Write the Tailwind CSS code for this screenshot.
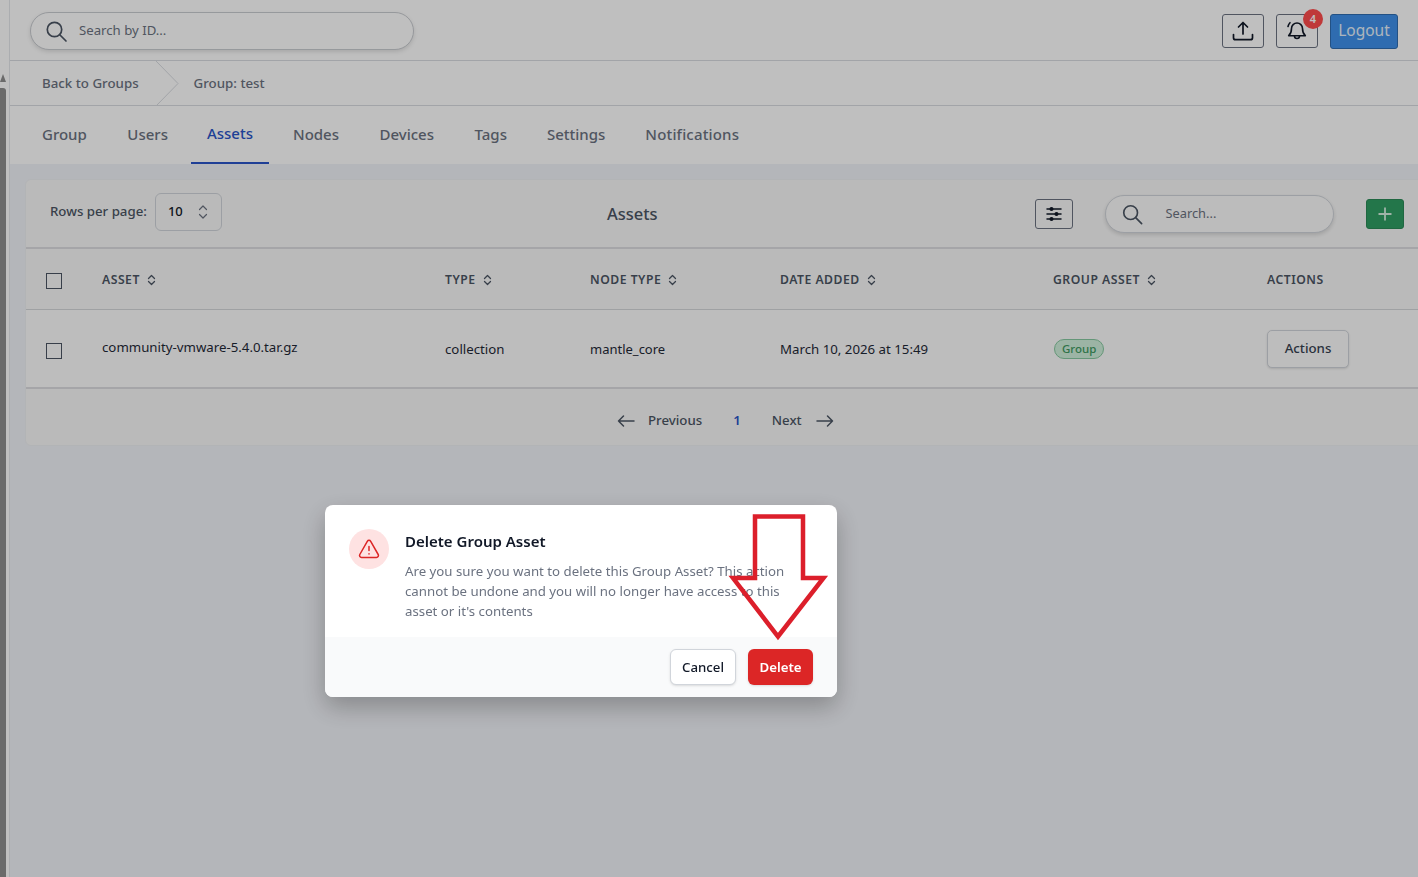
<!DOCTYPE html>
<html lang="en">
<head>
  <meta charset="UTF-8" />
  <meta name="viewport" content="width=device-width, initial-scale=1.0" />
  <title>Group Assets</title>
  <script src="https://cdn.jsdelivr.net/npm/@tailwindcss/browser@4"></script>
</head>
<body class="h-[877px] overflow-hidden bg-white font-['Noto_Sans',sans-serif] text-[#111827]">
  <!-- Page behind the dialog -->
  <div class="ml-[9px] flex h-[877px] w-[1409px] flex-col overflow-hidden border-l border-[#e5e7eb] bg-[#f1f3f8]">
    <!-- Top bar -->
    <header class="flex h-[61px] shrink-0 items-center border-b border-[#d8dbe0] bg-white pl-[20px] pr-[20px] pt-[2px]">
      <div class="flex h-[38px] w-[384px] items-center rounded-full border border-[#c9ccd1] bg-white pl-[13px] shadow-[0_2px_4px_rgba(0,0,0,0.12)]">
        <svg class="h-[24px] w-[24px] text-[#4b5563]" viewBox="0 0 24 24" fill="none" stroke="currentColor" stroke-width="1.7" stroke-linecap="round"><circle cx="10.5" cy="10.5" r="7.2"/><path d="M16 16l6 6"/></svg>
        <span class="ml-[11px] text-[13.2px] text-[#6b7280]">Search by ID...</span>
      </div>
      <div class="ml-auto flex items-center">
        <button class="flex h-[34px] w-[42px] items-center justify-center rounded-[3px] border border-[#6b7280] bg-white">
          <svg class="h-[24px] w-[24px] text-[#111827]" viewBox="0 0 24 24" fill="none" stroke="currentColor" stroke-width="1.7" stroke-linecap="round" stroke-linejoin="round"><path d="M12 15V3.5M7.5 8L12 3.5 16.5 8"/><path d="M2.5 15.5v3.2a2 2 0 002 2h15a2 2 0 002-2v-3.2"/></svg>
        </button>
        <button class="relative ml-[12px] flex h-[34px] w-[42px] items-center justify-center rounded-[3px] border border-[#6b7280] bg-white">
          <svg class="h-[24px] w-[24px] text-[#111827]" viewBox="0 0 24 24" fill="none" stroke="currentColor" stroke-width="1.6" stroke-linecap="round" stroke-linejoin="round"><path d="M6.5 9.5a5.5 5.5 0 0111 0c0 4 1.2 5.8 2.8 7.2H3.7C5.3 15.300 6.500 13.500 6.500 9.500z"/><path d="M9.500 17a2.500 2.500 0 005 0"/><path d="M3 7.500c.3-1.500 1-2.800 2-3.800"/></svg>
          <span class="absolute right-[-6px] top-[-6px] flex h-[20px] w-[20px] items-center justify-center rounded-full bg-[#ff4c4c] text-[11px] font-semibold text-white">4</span>
        </button>
        <button class="ml-[12px] h-[35px] w-[68px] rounded-[3px] border border-[#2f6db0] bg-[#3f91eb] text-[15.5px] text-[#e8f1fb]">Logout</button>
      </div>
    </header>

    <!-- Breadcrumb -->
    <nav class="flex h-[45px] shrink-0 items-center border-b border-[#d8dbe0] bg-white pl-[32px] pt-[1px] text-[13.3px] font-medium text-[#6b7280]">
      <span>Back to Groups</span>
      <svg class="ml-[16px] h-[45px] w-[24px] text-[#d8dbe0]" viewBox="0 0 24 45" fill="none" stroke="currentColor"><path d="M1 0l22 22.500L1 45"/></svg>
      <span class="ml-[15px]">Group: test</span>
    </nav>

    <!-- Tabs -->
    <div class="flex h-[58px] shrink-0 items-stretch gap-2 bg-white pl-[16px] text-[15px] font-medium text-[#6b7280]">
      <a class="flex items-center pl-4 pr-[16.500px] pb-[2px]">Group</a>
      <a class="flex items-center pl-4 pr-[15.500px] pb-[2px]">Users</a>
      <a class="flex items-center border-b-2 border-[#2a55c8] pl-[15.500px] pr-4 pb-[2px] text-[#2a55c8]">Assets</a>
      <a class="flex items-center pl-4 pr-[16.500px] pb-[2px]">Nodes</a>
      <a class="flex items-center pl-4 pr-[16.500px] pb-[2px]">Devices</a>
      <a class="flex items-center px-4 pb-[2px]">Tags</a>
      <a class="flex items-center px-4 pb-[2px]">Settings</a>
      <a class="flex items-center pl-[16px] pb-[2px] tracking-[0.17px]">Notifications</a>
    </div>

    <!-- Assets panel -->
    <section class="ml-[15px] mt-[15px] w-[1420px] shrink-0 rounded-[6px] border border-[#eef0f3] bg-[#f9f9f9]">
      <div class="flex h-[69px] items-center border-b-2 border-[#dcdde0] pl-[24px] pt-[1px]">
        <span class="mb-[4px] text-[13.25px] font-medium text-[#4b5563]">Rows per page:</span>
        <div class="mb-[4px] ml-[8px] flex h-[38px] w-[67px] items-center rounded-[6px] border border-[#d1d5db] bg-[#f9f9f9] pl-[12px]">
          <span class="text-[13px] font-medium text-[#111827]">10</span>
          <svg class="ml-[14px] h-[18px] w-[12px] text-[#6b7280]" viewBox="0 0 12 18" fill="none" stroke="currentColor" stroke-width="1.200" stroke-linecap="round" stroke-linejoin="round"><path d="M2.500 6.500L6 3l3.500 3.500M2.500 11.500L6 15l3.500-3.500"/></svg>
        </div>
        <h2 class="ml-[385px] text-[16.5px] font-medium text-[#4b5563]">Assets</h2>
        <button class="ml-[377px] flex h-[30px] w-[38px] items-center justify-center rounded-[3px] border border-[#6b7280]">
          <svg class="h-[18px] w-[18px] text-[#111827]" viewBox="0 0 18 18" fill="none" stroke="currentColor" stroke-width="1.500" stroke-linecap="round"><path d="M2 4h14M2 9h14M2 14h14"/><circle cx="6.500" cy="4" r="1.300" fill="currentColor"/><circle cx="11.500" cy="9" r="1.300" fill="currentColor"/><circle cx="6.500" cy="14" r="1.300" fill="currentColor"/></svg>
        </button>
        <div class="ml-[32px] flex h-[38px] w-[229px] items-center rounded-full border border-[#d1d5db] bg-[#fbfbfb] pl-[15px] shadow-[0_2px_4px_rgba(0,0,0,0.14)]">
          <svg class="h-[22px] w-[22px] text-[#4b5563]" viewBox="0 0 24 24" fill="none" stroke="currentColor" stroke-width="1.800" stroke-linecap="round"><circle cx="10.500" cy="10.500" r="7.500"/><path d="M16 16l6.500 6.500"/></svg>
          <span class="ml-[23px] text-[12.8px] text-[#6b7280]">Search...</span>
        </div>
        <button class="ml-[32px] flex h-[30px] w-[38px] items-center justify-center rounded-[3px] border border-[#2b8a57] bg-[#2f9e63]">
          <svg class="h-[16px] w-[16px] text-[#d6efe0]" viewBox="0 0 16 16" fill="none" stroke="currentColor" stroke-width="1.800"><path d="M8 1.500v13M1.500 8h13"/></svg>
        </button>
      </div>

      <!-- Table head -->
      <div class="grid h-[61px] grid-cols-[76px_343px_145px_190px_273px_214px_1fr] items-center border-b border-[#d5d7da] pt-[2px] text-[12.2px] font-semibold tracking-[0.5px] text-[#4b5563]">
        <span class="ml-[20px] mt-[2px] h-[16px] w-[16px] border border-[#4b5563] bg-[#fafafa]"></span>
        <span class="flex items-center">ASSET<svg class="ml-[7px] h-[12px] w-[9px]" viewBox="0 0 9 12" fill="none" stroke="currentColor" stroke-width="1.300" stroke-linecap="round" stroke-linejoin="round"><path d="M1.500 4.500L4.500 1.500l3 3M1.500 7.500l3 3 3-3"/></svg></span>
        <span class="flex items-center">TYPE<svg class="ml-[7px] h-[12px] w-[9px]" viewBox="0 0 9 12" fill="none" stroke="currentColor" stroke-width="1.300" stroke-linecap="round" stroke-linejoin="round"><path d="M1.500 4.500L4.500 1.500l3 3M1.500 7.500l3 3 3-3"/></svg></span>
        <span class="flex items-center">NODE TYPE<svg class="ml-[7px] h-[12px] w-[9px]" viewBox="0 0 9 12" fill="none" stroke="currentColor" stroke-width="1.300" stroke-linecap="round" stroke-linejoin="round"><path d="M1.500 4.500L4.500 1.500l3 3M1.500 7.500l3 3 3-3"/></svg></span>
        <span class="flex items-center">DATE ADDED<svg class="ml-[7px] h-[12px] w-[9px]" viewBox="0 0 9 12" fill="none" stroke="currentColor" stroke-width="1.300" stroke-linecap="round" stroke-linejoin="round"><path d="M1.500 4.500L4.500 1.500l3 3M1.500 7.500l3 3 3-3"/></svg></span>
        <span class="flex items-center">GROUP ASSET<svg class="ml-[7px] h-[12px] w-[9px]" viewBox="0 0 9 12" fill="none" stroke="currentColor" stroke-width="1.300" stroke-linecap="round" stroke-linejoin="round"><path d="M1.500 4.500L4.500 1.500l3 3M1.500 7.500l3 3 3-3"/></svg></span>
        <span>ACTIONS</span>
      </div>

      <!-- Table row -->
      <div class="grid h-[79px] grid-cols-[76px_343px_145px_190px_273px_214px_1fr] items-center border-b-2 border-[#dcdde0] bg-[#fdfdfd] pt-[2px] text-[13.25px] text-[#1f2937]">
        <span class="ml-[20px] mt-[2px] h-[16px] w-[16px] border border-[#4b5563] bg-[#fdfdfd]"></span>
        <span class="mb-[4px]">community-vmware-5.4.0.tar.gz</span>
        <span>collection</span>
        <span class="text-[13px]">mantle_core</span>
        <span>March 10, 2026 at 15:49</span>
        <span class="-mt-[2px]"><span class="ml-[1px] inline-block h-[20px] rounded-full border border-[#86c9a0] bg-[#d1f0dc] px-[7px] text-[11.500px] font-medium leading-[18px] text-[#3f9a62]">Group</span></span>
        <span class="-mt-[2px]"><button class="h-[38px] w-[82px] rounded-[5px] border border-[#d1d5db] bg-[#fdfdfd] text-[13.25px] font-medium text-[#374151] shadow-sm">Actions</button></span>
      </div>

      <!-- Pagination -->
      <div class="flex h-[56px] items-center pl-[591px] pt-[7px] text-[13.25px] font-medium text-[#4b5563]">
        <svg class="h-[14px] w-[18px]" viewBox="0 0 18 14" fill="none" stroke="currentColor" stroke-width="1.500" stroke-linecap="round" stroke-linejoin="round"><path d="M17 7H1.500M6.500 2l-5 5 5 5"/></svg>
        <span class="ml-[13px]">Previous</span>
        <span class="ml-[31px] font-semibold text-[#2a55c8]">1</span>
        <span class="ml-[31px]">Next</span>
        <svg class="ml-[14px] h-[14px] w-[18px]" viewBox="0 0 18 14" fill="none" stroke="currentColor" stroke-width="1.500" stroke-linecap="round" stroke-linejoin="round"><path d="M1 7h15.500M11.500 2l5 5-5 5"/></svg>
      </div>
    </section>
  </div>

  <!-- Backdrop -->
  <div class="fixed inset-0 bg-black/25"></div>

  <!-- Scrollbar sits on top of the backdrop -->
  <div class="fixed left-0 top-[74px] h-[8px] w-[6px] bg-[#6a6a6a] [clip-path:polygon(50%_0,100%_100%,0_100%)]"></div>
  <div class="fixed bottom-0 left-0 top-[88px] w-[6px] rounded-tr-[3px] bg-[#6a6a6a]"></div>

  <!-- Delete dialog -->
  <div class="fixed left-[325px] top-[505px] w-[512px] overflow-hidden rounded-[8px] bg-white shadow-[0_10px_25px_rgba(0,0,0,0.25)]">
    <div class="flex h-[132px] pl-[24px] pt-[24px]">
      <div class="flex h-[40px] w-[40px] shrink-0 items-center justify-center rounded-full bg-[#fee2e2]">
        <svg class="h-[24px] w-[24px] text-[#dc2626]" viewBox="0 0 24 24" fill="none" stroke="currentColor" stroke-width="1.500" stroke-linecap="round" stroke-linejoin="round"><path d="M10.300 4.300L2.800 17.500A2 2 0 004.500 20.500h15a2 2 0 001.700-3L13.700 4.300a2 2 0 00-3.400 0z"/><path d="M12 9.500v4M12 16.800v.1"/></svg>
      </div>
      <div class="ml-[16px] w-[400px]">
        <h3 class="text-[15px] font-semibold leading-[24px] text-[#111827]">Delete Group Asset</h3>
        <p class="mt-[8px] text-[13.25px] leading-[20px] text-[#6b7280]">Are you sure you want to delete this Group Asset? This action cannot be undone and you will no longer have access to this asset or it's contents</p>
      </div>
    </div>
    <div class="flex h-[60px] items-center justify-end gap-[12px] bg-[#f9fafb] pr-[24px]">
      <button class="h-[36px] w-[66px] rounded-[6px] border border-[#d1d5db] bg-white pt-[1px] text-[13.25px] font-medium text-[#111827] shadow-sm">Cancel</button>
      <button class="h-[36px] w-[65px] rounded-[6px] bg-[#dc2626] pt-[1px] text-[13.25px] font-semibold text-white shadow-sm">Delete</button>
    </div>
  </div>

  <!-- Red annotation arrow -->
  <svg class="fixed left-[720px] top-[505px] h-[145px] w-[120px] text-[#dc1f2b]" viewBox="0 0 120 145" fill="none" stroke="currentColor" stroke-width="4.500"><path d="M35 11.500h48V73h20.500L58 131.500 13 73h22z"/></svg>
</body>
</html>
